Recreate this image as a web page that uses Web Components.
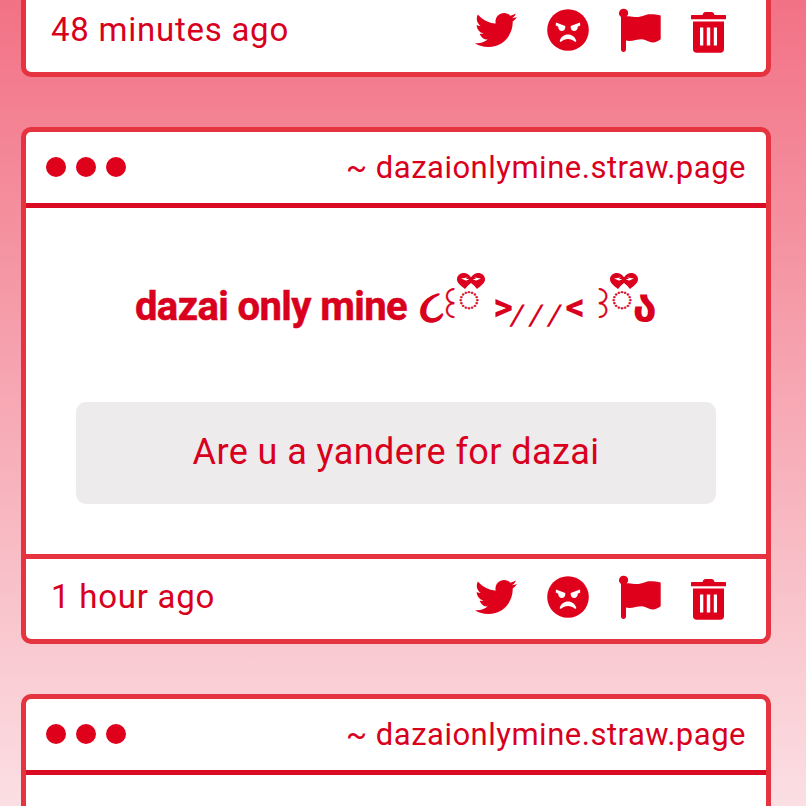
<!DOCTYPE html>
<html><head><meta charset="utf-8"><style>
html,body{margin:0;padding:0;height:806px;overflow:hidden}
body{background:linear-gradient(180deg,#f27285 0%,#fbdfe3 100%);font-family:Roboto,"Noto Sans","DejaVu Sans",sans-serif;color:#d9001e}
</style></head><body>
<ngl-page>
<ngl-card class="clip" footer-only time="48 minutes ago"></ngl-card>
<ngl-card url="~ dazaionlymine.straw.page" time="1 hour ago" question="Are u a yandere for dazai"></ngl-card>
<ngl-card url="~ dazaionlymine.straw.page" head-only></ngl-card>
</ngl-page>
<script>
class NglPage extends HTMLElement{constructor(){super();this.attachShadow({mode:'open'}).innerHTML=`<style>:host{display:flex;flex-direction:column;gap:50px;padding:0 35px 0 21px;height:806px;overflow:hidden;box-sizing:border-box;width:806px}::slotted(.clip){margin-top:-8px}</style><slot></slot>`}}
class NglRibbon extends HTMLElement{constructor(){super();this.attachShadow({mode:'open'}).innerHTML=`<style>:host{display:block;position:absolute;width:28px;height:16px}svg{display:block;fill:#dc001e}</style><svg width="28" height="16" viewBox="0 0 28 16"><path fill-rule="evenodd" d="M14 4.200C11.500 1.300 9.500 0 7 0 3 0 0 2.600 0 6.200c0 3.900 4 6.400 8 9.800l3-3.500 3-2.500 3 2.500 3 3.500c4-3.400 8-5.900 8-9.800C28 2.600 25 0 21 0c-2.500 0-4.500 1.300-7 4.200zM4 5.600l6.500-1-1.500 1.300h2.500v1H9l1.500 1.300zm20 0l-6.500-1 1.500 1.300h-2.500v1H19l-1.500 1.300z"/></svg>`}}
class NglIcons extends HTMLElement{constructor(){super();this.attachShadow({mode:'open'}).innerHTML=`<style>:host{display:block;position:relative;width:252px;height:80px;flex:none}svg{position:absolute;fill:#df001c}</style>
<svg style="left:0;top:20px" width="42" height="36" viewBox="0 48 512 416"><path d="M459.37 151.716c.325 4.548.325 9.097.325 13.645 0 138.72-105.583 298.558-298.558 298.558-59.452 0-114.68-17.219-161.137-47.106 8.447.974 16.568 1.299 25.34 1.299 49.055 0 94.213-16.568 130.274-44.832-46.132-.975-84.792-31.188-98.112-72.772 6.498.974 12.995 1.624 19.818 1.624 9.421 0 18.843-1.3 27.614-3.573-48.081-9.747-84.143-51.98-84.143-102.985v-1.299c13.969 7.797 30.214 12.67 47.431 13.319-28.264-18.843-46.781-51.005-46.781-87.391 0-19.492 5.197-37.36 14.294-52.954 51.655 63.675 129.3 105.258 216.365 109.807-1.624-7.797-2.599-15.918-2.599-24.04 0-57.828 46.782-104.934 104.934-104.934 30.213 0 57.502 12.67 76.67 33.137 23.715-4.548 46.456-13.32 66.599-25.34-7.798 24.366-24.366 44.833-46.132 57.827 21.117-2.273 41.584-8.122 60.426-16.243-14.292 20.791-32.161 39.308-52.628 54.253z"/></svg>
<svg style="left:72px;top:17px" width="42" height="42" viewBox="0 0 42 42"><circle cx="21" cy="21" r="20.8"/><path fill="#fff" d="M9 13.500l9.300 3.600c.3 2.800-.9 4.900-3.200 4.900-2.500 0-4-1.900-3.800-4.300l-2.600-1.100zM33 13.500l-9.300 3.600c-.3 2.800.9 4.900 3.200 4.900 2.500 0 4-1.900 3.800-4.300l2.600-1.100zM21 25.500c3.900 0 7 2.400 8.200 6 .3 1-.8 1.700-1.600 1-1.700-1.500-4-2.600-6.600-2.600s-4.900 1.100-6.600 2.600c-.8.7-1.900 0-1.600-1 1.200-3.600 4.300-6 8.200-6z"/></svg>
<svg style="left:144px;top:17px;overflow:visible" width="43" height="43" viewBox="0 0 43 43"><path d="M4.800-.3A4.500 4.500 0 0 1 7.800 7.500C10 6.500 14 8 18 8 23 8 26 5.200 31 5.200 35 5.200 38.500 5.500 41.700 6.500V30.300C38.900 32.100 36.500 33.700 33 33.500 29.300 33.300 26.500 30.300 22.700 30.300 17.500 30.300 12.500 33 7 31.600V40.500C7 41.900 5.900 43 4.500 43S2 41.900 2 40.500V7.900A4.500 4.500 0 0 1 4.800-.3z"/></svg>
<svg style="left:216px;top:20px" width="35" height="41" viewBox="0 0 35 41"><path fill-rule="evenodd" d="M1 3h10.500C12 1 13 0 14.500 0h6c1.500 0 2.500 1 3 3H34c.6 0 1 .4 1 1v3.300H0V4c0-.6.4-1 1-1zM2 9.500h31v27.800c0 2-1.500 3.500-3.500 3.500h-24c-2 0-3.500-1.500-3.500-3.500zM9 15.500v18h3.300v-18zm6.800 0v18h3.400v-18zm7 0v18h3.200v-18z"/></svg>`}}
class NglCard extends HTMLElement{constructor(){super();this.attachShadow({mode:'open'})}
connectedCallback(){const a=n=>this.getAttribute(n)||'';const F=this.hasAttribute('footer-only'),H=this.hasAttribute('head-only');
const head=F?'':`<header><span class="dots"><i></i><i></i><i></i></span><span class="url">${a('url')}</span></header>`;
const body=(F||H)?(H?'<main class="empty"></main>':''):`<main><h1><span class="name">dazai only mine</span><span class="kao"><span class="g a">૮</span><span class="g b">꒰</span><span class="g c"><span class="dc">◌</span><ngl-ribbon></ngl-ribbon></span><span class="g d">&gt;</span><span class="g e">///</span><span class="g d d2">&lt;</span><span class="g b b2">꒱</span><span class="g c c2"><span class="dc">◌</span><ngl-ribbon></ngl-ribbon></span><span class="g f">ა</span></span></h1><div class="q">${a('question')}</div></main>`;
const foot=H?'':`<footer class="${F?'nt':''}"><span class="t">${a('time')}</span><ngl-icons></ngl-icons></footer>`;
this.shadowRoot.innerHTML=`<style>
:host{display:block;flex:none;background:#fff;border:5px solid #e5343f;border-radius:10px;overflow:hidden;color:#d9001e}
:host([footer-only]){border-top:0;border-radius:0 0 10px 10px}
:host([head-only]){height:200px}
header{display:flex;justify-content:space-between;align-items:center;height:70px;padding:0 20px 1px;border-bottom:5px solid #d90a22}
.dots{display:flex;gap:10px}.dots i{width:20px;height:20px;border-radius:50%;background:#df001c}
.url{font-size:31px;letter-spacing:.5px}
main{padding:0 50px 50px;box-sizing:border-box;height:346px;display:flex;flex-direction:column}
main.empty{height:100px}
h1{margin:0;height:194px;padding-top:2px;box-sizing:border-box;display:flex;align-items:center;justify-content:center;font-size:40px;font-weight:700;white-space:nowrap}
.name{letter-spacing:-.6px;-webkit-text-stroke:.5px currentColor}
.kao{display:inline-flex;align-items:center;margin-left:14px;height:60px;letter-spacing:0}
.g{display:flex;justify-content:center;flex:none;position:relative;line-height:60px;height:60px}
.a{width:24px;margin-left:-2px;margin-right:2px;font-size:46px;justify-content:flex-start;letter-spacing:-14px}
.b{width:13px;font-size:34px;font-weight:400;margin-left:1px;-webkit-text-stroke:.3px currentColor;justify-content:flex-start;letter-spacing:-18px;text-indent:-9px}
.c{width:19px;margin-left:3px;margin-right:13px;top:-9px}
.dc{display:block;font-size:37px;font-family:"Noto Sans",sans-serif;font-weight:700;-webkit-text-stroke:.5px currentColor;width:19px;letter-spacing:-10px;margin-left:-4px;padding-right:4px}
.c2{margin-right:2px}
.d{width:18px;font-size:38px;top:1px}
.d2{margin-right:14px}
.e{width:54px;justify-content:flex-start;font-size:29px;font-weight:500;letter-spacing:10.5px;top:9px;transform:skewX(-12deg)}
.f{width:21px;margin-left:-2px;margin-right:2px;font-size:44px}
ngl-ribbon{left:-5px;top:6px}
.q{height:102px;padding-bottom:2px;box-sizing:border-box;border-radius:10px;background:#edebec;display:flex;align-items:center;justify-content:center;font-size:36px;letter-spacing:.42px}
footer{display:flex;align-items:center;justify-content:space-between;height:80px;border-top:5px solid #e5343f;padding:0 39px 0 25px}
footer.nt{border-top:0}
.t{font-size:33px;letter-spacing:.75px;margin-top:-5px}
</style>${head}${body}${foot}`}}
customElements.define('ngl-page',NglPage);customElements.define('ngl-ribbon',NglRibbon);customElements.define('ngl-icons',NglIcons);customElements.define('ngl-card',NglCard);
</script></body></html>
